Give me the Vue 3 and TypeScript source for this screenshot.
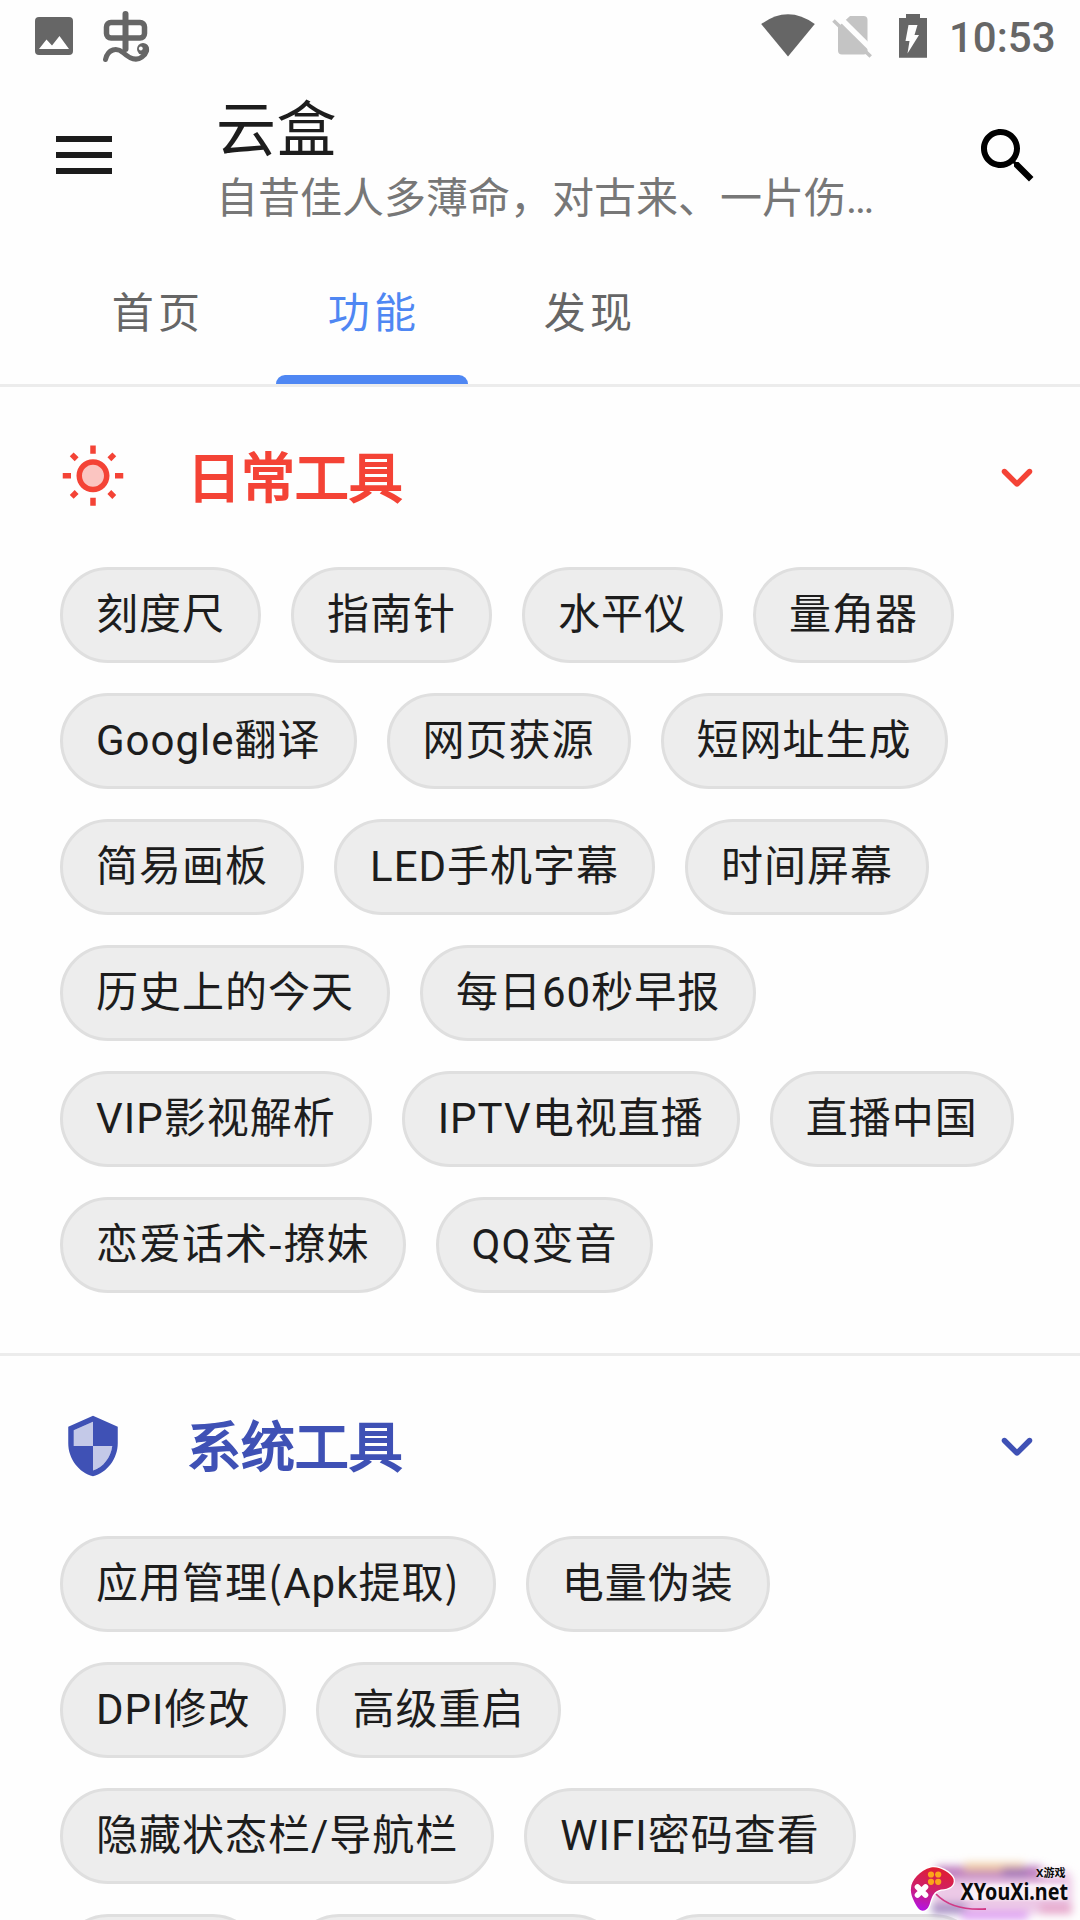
<script setup lang="ts">
interface Chip {
  label?: string
  width?: number
}
interface Section {
  id: 'daily' | 'system'
  title: string
  rows: Chip[][]
}

const tabs: string[] = ['首页', '功能', '发现']
const activeTab = 1

const row = (...labels: string[]): Chip[] => labels.map((label) => ({ label }))

// Hyphens and brackets are set in the Chinese face.
const isMark = (part: string): boolean => /^[-()]$/.test(part)
const split = (label: string): string[] => label.split(/([-()])/).filter(Boolean)

const sections: Section[] = [
  {
    id: 'daily',
    title: '日常工具',
    rows: [
      row('刻度尺', '指南针', '水平仪', '量角器'),
      row('Google翻译', '网页获源', '短网址生成'),
      row('简易画板', 'LED手机字幕', '时间屏幕'),
      row('历史上的今天', '每日60秒早报'),
      row('VIP影视解析', 'IPTV电视直播', '直播中国'),
      row('恋爱话术-撩妹', 'QQ变音'),
    ],
  },
  {
    id: 'system',
    title: '系统工具',
    rows: [
      row('应用管理(Apk提取)', '电量伪装'),
      row('DPI修改', '高级重启'),
      row('隐藏状态栏/导航栏', 'WIFI密码查看'),
      [{ width: 201 }, { width: 330 }, { width: 331 }],
    ],
  },
]
</script>

<template>
  <div class="screen">
    <div class="status">
      <svg class="s-pic" width="38" height="38" viewBox="35 17 38 38">
        <rect x="35" y="17" width="38" height="38" rx="4" fill="#666" />
        <path d="M39 49L46.500 39.500L52 45.500L59.500 36L69 49Z" fill="#fefefe" />
      </svg>
      <svg class="s-bug" width="50" height="54" viewBox="101 10 50 54" fill="none" stroke="#666" stroke-linecap="round">
        <rect x="106.500" y="22.500" width="38" height="15.500" rx="4.500" stroke-width="5.500" />
        <path d="M125.500 14V49" stroke-width="6" />
        <path d="M105.500 59.500C108 48.500 117 47.500 123 52.500C130 59 136 61.500 142 57C147 53.500 147.500 49 145.500 47" stroke-width="5" />
        <circle cx="143" cy="49" r="6" fill="#666" stroke="none" />
        <circle cx="140.800" cy="48.500" r="1.900" fill="#fefefe" stroke="none" />
      </svg>
      <span class="grow"></span>
      <svg class="s-wifi" width="54" height="43" viewBox="760.500 14 54 43">
        <path d="M760.700 24Q787.500 4.400 814.300 24L787.500 56.500Z" fill="#666" />
      </svg>
      <svg class="s-sim" width="40" height="44" viewBox="832 15 40 44">
        <path d="M850 16H863.500Q867.500 16 867.500 20V50.500Q867.500 54.500 863.500 54.500H842Q838 54.500 838 50.500V27Z" fill="#c4c4c4" />
        <path d="M836 14L876 53.500" stroke="#fefefe" stroke-width="5.500" />
        <path d="M833.500 20.500L870.700 56.500" stroke="#c4c4c4" stroke-width="3.600" />
      </svg>
      <svg class="s-bat" width="28" height="44" viewBox="899 14 28 44">
        <path d="M906 14H920V18H927V57.700H899V18H906Z" fill="#666" />
        <path d="M908.500 25H917.500L914.500 35H919L907.500 53.500L909.500 41H905.500Z" fill="#fefefe" />
      </svg>
      <span class="clock">10:53</span>
    </div>

    <header class="toolbar">
      <div class="menu"><i></i><i></i><i></i></div>
      <div class="titles">
        <h1>云盒</h1>
        <p>自昔佳人多薄命，对古来、一片伤…</p>
      </div>
      <svg class="search" width="72" height="72" viewBox="0 0 24 24">
        <path d="M15.500 14h-.79l-.28-.27C15.410 12.590 16 11.110 16 9.500 16 5.910 13.090 3 9.500 3S3 5.910 3 9.500 5.910 16 9.500 16c1.610 0 3.090-.59 4.230-1.570l.27.28v.79l5 4.990L20.490 19l-4.990-5zm-6 0C7.010 14 5 11.990 5 9.500S7.010 5 9.500 5 14 7.010 14 9.500 11.990 14 9.500 14z" />
      </svg>
    </header>

    <nav class="tabs">
      <div v-for="(tab, i) in tabs" :key="tab" class="tab" :class="{ active: i === activeTab }">
        <span>{{ tab }}</span>
      </div>
    </nav>

    <section v-for="s in sections" :key="s.id" class="section" :class="s.id">
      <div class="head">
        <svg v-if="s.id === 'daily'" width="66" height="66" viewBox="0 0 24 24" fill="currentColor">
          <circle cx="12" cy="11.500" r="4.500" opacity=".3" />
          <path d="M6.760 4.840l-1.800-1.790-1.410 1.410 1.790 1.790 1.420-1.410zM4 10.500H1v2h3v-2zm9-9.950h-2V3.500h2V.55zm7.450 3.910l-1.410-1.410-1.790 1.790 1.410 1.410 1.790-1.790zm-3.210 13.700l1.790 1.800 1.410-1.410-1.800-1.790-1.400 1.400zM20 10.500v2h3v-2h-3zm-8-5c-3.310 0-6 2.690-6 6s2.690 6 6 6 6-2.690 6-6-2.690-6-6-6zm0 10c-2.210 0-4-1.790-4-4s1.790-4 4-4 4 1.790 4 4-1.790 4-4 4zm-1 6.950h2V19.500h-2v2.950zM3.550 18.540l1.410 1.410 1.790-1.800-1.410-1.410-1.790 1.800z" />
        </svg>
        <svg v-else width="66" height="66" viewBox="0 0 24 24" fill="currentColor">
          <path d="M5 6.300V12H12V3.190ZM12 12V20.930C15.720 19.780 18.470 16.110 19 12Z" opacity=".3" />
          <path d="M12 1L3 5v6c0 5.550 3.840 10.740 9 12 5.160-1.260 9-6.450 9-12V5l-9-4zm0 19.930V12H5V6.300l7-3.110V12h7c-.53 4.110-3.280 7.780-7 8.930z" />
        </svg>
        <h2>{{ s.title }}</h2>
        <svg width="66" height="66" viewBox="0 0 24 24" fill="currentColor">
          <path d="M8.120 9.290L12 13.170l3.880-3.880c.39-.39 1.020-.39 1.410 0 .39.39.39 1.020 0 1.410l-4.590 4.590c-.39.39-1.020.39-1.410 0L6.700 10.700c-.39-.39-.39-1.020 0-1.410.39-.38 1.030-.39 1.420 0z" />
        </svg>
      </div>
      <div class="chips">
        <div v-for="(r, ri) in s.rows" :key="ri" class="chip-row">
          <div v-for="(c, ci) in r" :key="ci" class="chip" :style="c.width ? { width: c.width + 'px' } : undefined">
            <template v-if="c.label"><span v-for="(part, pi) in split(c.label)" :key="pi" :class="{ mark: isMark(part) }">{{ part }}</span></template>
          </div>
        </div>
      </div>
    </section>

    <svg class="badge" width="180" height="70" viewBox="900 1850 180 70">
      <defs>
        <linearGradient id="pad" x1="0.600" y1="0" x2="0.350" y2="1">
          <stop offset="0" stop-color="#e01f30" />
          <stop offset="0.500" stop-color="#cf2068" />
          <stop offset="1" stop-color="#b414e0" />
        </linearGradient>
        <filter id="soft" x="-30%" y="-60%" width="160%" height="220%"><feGaussianBlur stdDeviation="4" /></filter>
        <filter id="edge" x="-10%" y="-30%" width="120%" height="160%"><feGaussianBlur stdDeviation="1.500" /></filter>
      </defs>
      <g filter="url(#soft)">
        <rect x="934" y="1870" width="138" height="44" rx="10" fill="#ecc9e6" />
        <rect x="936" y="1866" width="106" height="13" fill="#c07fc0" />
        <rect x="964" y="1863" width="60" height="8" fill="#efc9a0" />
        <rect x="1002" y="1868" width="26" height="9" fill="#9d70b8" />
        <rect x="932" y="1903" width="34" height="11" fill="#a78fc4" />
        <rect x="962" y="1911" width="66" height="9" fill="#dfa0f4" />
        <rect x="1040" y="1904" width="32" height="10" fill="#e6a6cb" />
      </g>
      <path d="M936 1894Q952 1911 986 1909" fill="none" stroke="#d13a86" stroke-width="1.800" />
      <path d="M931 1867.500C938 1865.500 951 1872 953.500 1879C955 1886 949 1889 941 1889.500C934 1891 932 1896 930 1903C928 1911 922 1913 918 1908C914 1902 910 1894 911 1888C911 1881 920 1870 931 1867.500Z" fill="url(#pad)" stroke="#fff" stroke-width="2.400" paint-order="stroke" />
      <g fill="#fba51a">
        <circle cx="931" cy="1874.500" r="3.100" /><circle cx="938.200" cy="1874.500" r="3.100" />
        <circle cx="931" cy="1881.800" r="3.100" /><circle cx="938.200" cy="1881.800" r="3.100" />
      </g>
      <path d="M917.500 1887L925.500 1895M925.500 1887L917.500 1895" stroke="#fff" stroke-width="5.600" stroke-linecap="round" />
      <g filter="url(#edge)" fill="#fff" opacity="0.700">
        <rect x="963" y="1884" width="104" height="16" />
        <rect x="1038" y="1868" width="26" height="9" />
      </g>
      <text class="site" x="960.500" y="1900" textLength="107.500" lengthAdjust="spacingAndGlyphs">XYouXi.net</text>
      <text class="brand" x="1036" y="1876.500" textLength="29.500" lengthAdjust="spacingAndGlyphs">X游戏</text>
    </svg>
  </div>
</template>

<style>
body {
  background: #fefefe;
  overflow: hidden;
}
</style>

<style scoped>
.screen {
  position: relative;
  width: 1080px;
  height: 1920px;
  overflow: hidden;
  background: #fefefe;
  color: #1d1d1d;
  font-family: Roboto, 'Noto Sans CJK SC', sans-serif;
}
svg {
  display: block;
  flex: none;
}
.status {
  display: flex;
  align-items: flex-start;
  height: 72px;
}
.s-pic { margin: 17px 28px 0 35px; }
.s-bug { margin-top: 10px; }
.grow { flex: 1; }
.s-wifi { margin: 14px 17.500px 0 0; }
.s-sim { margin: 15px 27px 0 0; }
.s-bat { margin: 14px 22px 0 0; }
.clock {
  width: 131px;
  margin-top: 13px;
  line-height: 50px;
  font-size: 42px;
  font-weight: 500;
  color: #666;
}
.toolbar {
  display: flex;
  align-items: center;
  height: 168px;
}
.menu {
  display: flex;
  flex-direction: column;
  gap: 10px;
  width: 56px;
  margin: -2px 104px 0 56px;
}
.menu i {
  height: 6px;
  background: #1c1c1c;
}
.titles {
  flex: 1;
  padding-top: 16px;
  white-space: nowrap;
}
h1 {
  margin: 0;
  font-size: 60px;
  line-height: 70px;
  font-weight: 400;
  letter-spacing: 0.6px;
}
p {
  margin: 0;
  font-size: 42px;
  line-height: 66px;
  color: #777;
}
.search { margin-right: 36px; }
.tabs {
  display: flex;
  height: 144px;
  padding-left: 48px;
  border-bottom: 3px solid #ececec;
}
.tab {
  display: flex;
  flex-direction: column;
  align-items: center;
  width: 216px;
  font-size: 42px;
  letter-spacing: 4.200px;
  color: #666;
}
.tab span {
  height: 144px;
  margin-left: 4px;
  line-height: 148px;
}
.tab.active { color: #4f87f3; }
.tab.active::after {
  content: '';
  width: 192px;
  height: 9px;
  margin-top: -9px;
  border-radius: 9px 9px 0 0;
  background: #4f87f3;
}
.section {
  padding: 57px 30px 60px 60px;
}
.section + .section { border-top: 3px solid #ececec; }
.head {
  display: flex;
  align-items: center;
  height: 66px;
}
h2 {
  flex: 1;
  margin: 0 0 0 61px;
  padding-top: 5px;
  font-size: 54px;
  line-height: 70px;
  font-weight: 400;
  letter-spacing: -0.100px;
  -webkit-text-stroke: 2px currentColor;
}
.daily .head { color: #f44336; }
.system .head { color: #3f51b5; }
.chips {
  display: flex;
  flex-direction: column;
  gap: 30px;
  margin-top: 57px;
}
.chip-row {
  display: flex;
  gap: 30px;
}
.chip {
  flex: none;
  box-sizing: border-box;
  height: 96px;
  padding: 0 33px;
  border: 3px solid #dfdfdf;
  border-radius: 48px;
  background: #ededed;
  font-size: 42px;
  line-height: 90px;
  letter-spacing: 1px;
  white-space: nowrap;
}
.mark {
  font-family: 'Noto Sans CJK SC', sans-serif;
  line-height: 1;
}
.badge {
  position: absolute;
  right: 0;
  bottom: 0;
}
.site {
  font: 700 24px 'Noto Sans', sans-serif;
  fill: #0a0a0a;
}
.brand {
  font: 700 11px 'Noto Sans', 'Noto Sans CJK SC', sans-serif;
  fill: #0a0a0a;
}
</style>
